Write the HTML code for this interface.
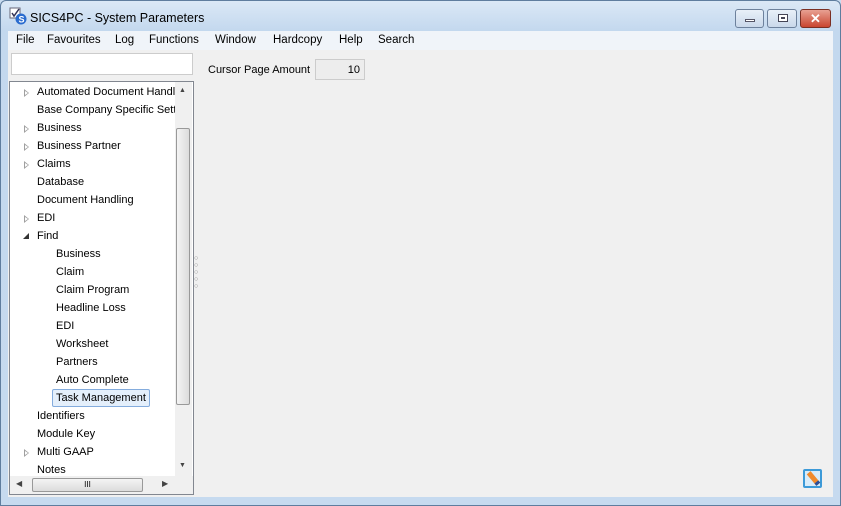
<!DOCTYPE html><html><head><style>
*{margin:0;padding:0;box-sizing:border-box}
body{width:841px;height:506px;overflow:hidden;font-family:"Liberation Sans",sans-serif;font-size:11px;color:#000;background:#c9dcf0;position:relative}
.frame{position:absolute;left:0;top:0;width:841px;height:506px;background:linear-gradient(#dbe8f6,#c3d8ee 30px,#c6daef);border:1px solid #5f7d9e;border-radius:6px 6px 0 0}
.title{position:absolute;left:30px;top:11px;font-size:12.5px}
.menu{position:absolute;left:8px;top:31px;width:825px;height:19px;background:#f0f4f9;}
.menu span{position:absolute;top:3px;font-size:11.5px}
.content{position:absolute;left:8px;top:50px;width:825px;height:447px;background:#f0f0f0}
.btn{position:absolute;top:9px;height:19px;border:1px solid #6d819c;border-radius:3px;background:linear-gradient(#e9f0f8,#c9d8ea)}
.tree{position:absolute;left:9px;top:81px;width:185px;height:414px;border:1px solid #828790;background:#fff}
.row{position:absolute;height:18px;line-height:20px;white-space:nowrap;font-size:11px}
.arr{position:absolute;left:14px;top:7px;width:0;height:0;border-left:5px solid #a0a0a0;border-top:4px solid transparent;border-bottom:4px solid transparent}
.arr::after{content:"";position:absolute;left:-4px;top:-2px;border-left:3px solid #fff;border-top:2px solid transparent;border-bottom:2px solid transparent}
</style></head><body>
<div class="frame"></div>
<svg style="position:absolute;left:9px;top:7px" width="18" height="18"><rect x="1" y="1" width="10" height="10" fill="#fff" stroke="#667"/><path d="M3 6l2 3 5-7" stroke="#335" fill="none" stroke-width="1.5"/><circle cx="12" cy="12" r="5.5" fill="#2a6ccf"/><text x="9.5" y="15.5" font-size="9" fill="#fff" font-weight="bold" font-family="Liberation Sans">S</text></svg>
<div class="title">SICS4PC - System Parameters</div>
<div class="btn" style="left:735px;width:29px"><div style="position:absolute;left:9px;top:9px;width:10px;height:3px;background:#fff;border:1px solid #556"></div></div>
<div class="btn" style="left:767px;width:30px"><div style="position:absolute;left:10px;top:4px;width:10px;height:8px;background:#fff;border:1px solid #445"><div style="margin:2px;width:4px;height:2px;border:1px solid #445"></div></div></div>
<div class="btn" style="left:800px;width:31px;background:linear-gradient(#e8a193,#c9452f);border-color:#7b2f23"><div style="position:absolute;left:0;width:29px;top:0;text-align:center;color:#fff;font-weight:bold;font-size:13px;line-height:17px">✕</div></div>
<div class="menu">
<span style="left:8px">File</span><span style="left:39px">Favourites</span><span style="left:107px">Log</span><span style="left:141px">Functions</span><span style="left:207px">Window</span><span style="left:265px">Hardcopy</span><span style="left:331px">Help</span><span style="left:370px">Search</span>
</div>
<div class="content"></div>
<div style="position:absolute;left:11px;top:53px;width:182px;height:22px;background:#fff;border:1px solid #ccc"></div>
<div style="position:absolute;left:208px;top:64px">Cursor Page Amount</div>
<div style="position:absolute;left:315px;top:59px;width:50px;height:21px;border:1px solid #ccc;background:#ededed;text-align:right;padding:4px 4px 0 0">10</div>
<div class="tree">
<div class="row" style="top:0;left:0"><i class="arr"></i><span style="position:absolute;left:27px">Automated Document Handlii</span></div>
<div class="row" style="top:18px;left:27px">Base Company Specific Setti</div>
<div class="row" style="top:36px;left:0"><i class="arr"></i><span style="position:absolute;left:27px">Business</span></div>
<div class="row" style="top:54px;left:0"><i class="arr"></i><span style="position:absolute;left:27px">Business Partner</span></div>
<div class="row" style="top:72px;left:0"><i class="arr"></i><span style="position:absolute;left:27px">Claims</span></div>
<div class="row" style="top:90px;left:27px">Database</div>
<div class="row" style="top:108px;left:27px">Document Handling</div>
<div class="row" style="top:126px;left:0"><i class="arr"></i><span style="position:absolute;left:27px">EDI</span></div>
<div class="row" style="top:144px;left:0"><i style="position:absolute;left:13px;top:7px;border-right:6px solid #333;border-top:6px solid transparent"></i><span style="position:absolute;left:27px">Find</span></div>
<div class="row" style="top:162px;left:46px">Business</div>
<div class="row" style="top:180px;left:46px">Claim</div>
<div class="row" style="top:198px;left:46px">Claim Program</div>
<div class="row" style="top:216px;left:46px">Headline Loss</div>
<div class="row" style="top:234px;left:46px">EDI</div>
<div class="row" style="top:252px;left:46px">Worksheet</div>
<div class="row" style="top:270px;left:46px">Partners</div>
<div class="row" style="top:288px;left:46px">Auto Complete</div>
<div class="row" style="top:307px;left:42px;padding:0 3px;border:1px solid #84acdd;border-radius:2px;background:#e4effb;line-height:17px">Task Management</div>
<div class="row" style="top:324px;left:27px">Identifiers</div>
<div class="row" style="top:342px;left:27px">Module Key</div>
<div class="row" style="top:360px;left:0"><i class="arr"></i><span style="position:absolute;left:27px">Multi GAAP</span></div>
<div class="row" style="top:378px;left:27px">Notes</div>
<div style="position:absolute;left:165px;top:0;width:17px;height:394px;background:#f0f0f0"></div>
<div style="position:absolute;left:166px;top:46px;width:14px;height:277px;border:1px solid #999;border-radius:2px;background:linear-gradient(90deg,#f4f4f4,#dcdcdc)"></div>
<div style="position:absolute;left:169px;top:5px;font-size:7px;color:#444">▲</div>
<div style="position:absolute;left:169px;top:380px;font-size:7px;color:#444">▼</div>
<div style="position:absolute;left:0;top:394px;width:183px;height:18px;background:#f0f0f0"></div>
<div style="position:absolute;left:22px;top:396px;width:111px;height:14px;border:1px solid #999;border-radius:2px;background:linear-gradient(#f4f4f4,#dcdcdc);text-align:center;font-size:8px;line-height:12px">III</div>
<div style="position:absolute;left:6px;top:397px;font-size:8px;color:#444">◀</div>
<div style="position:absolute;left:152px;top:397px;font-size:8px;color:#444">▶</div>
</div>
<div style="position:absolute;left:194px;top:255px;width:6px;font-size:7px;line-height:7px;color:#888">○<br>○<br>○<br>○<br>○</div>
<div style="position:absolute;left:803px;top:469px;width:19px;height:19px;border:2px solid #3c9ad8;border-radius:2px;background:#d8ecfa"><div style="position:absolute;left:6px;top:0;width:5px;height:15px;background:#f08a2c;transform:rotate(-40deg);border-bottom:3px solid #2a4f9a"></div></div>
</body></html>
